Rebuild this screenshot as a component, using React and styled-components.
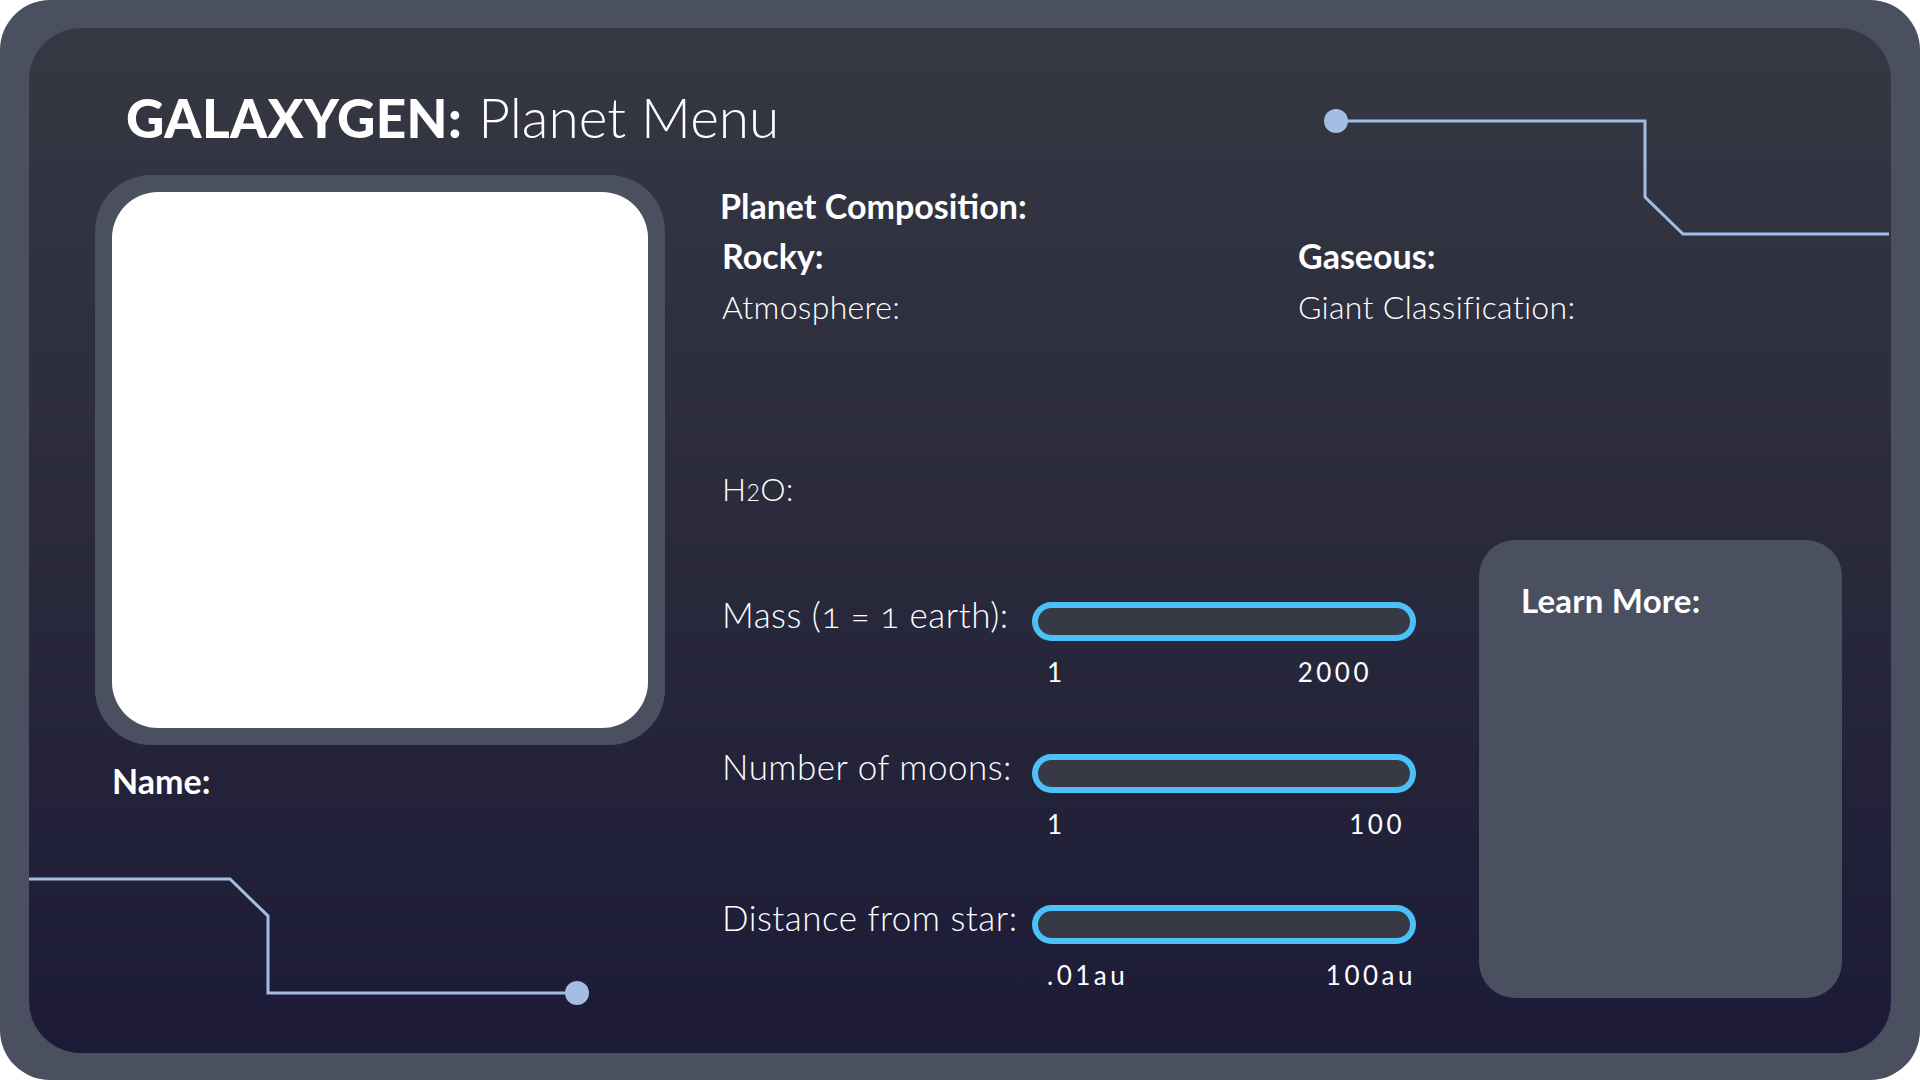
import styled, { createGlobalStyle } from 'styled-components';

const SLIDERS = [
	{ id: 'mass', label: 'Mass (1 = 1 earth):', min: '1', max: '2000', endGap: 44 },
	{ id: 'moons', label: 'Number of moons:', min: '1', max: '100', endGap: 11 },
	{ id: 'distance', label: 'Distance from star:', min: '.01au', max: '100au', endGap: 0 },
];

const LINE = '#a4bee3';

export default function App() {
	return (
		<>
			<GlobalStyle />
			<Frame>
				<Panel>
					<Circuit viewBox='0 0 1862 1025' preserveAspectRatio='none'>
						<polyline
							points='1307,93 1616,93 1616,169 1654,206 1860,206'
							fill='none'
							stroke={LINE}
							strokeWidth='3'
						/>
						<circle cx='1307' cy='93' r='12' fill={LINE} />
						<polyline
							points='0,851 201,851 239,888 239,965 548,965'
							fill='none'
							stroke={LINE}
							strokeWidth='3'
						/>
						<circle cx='548' cy='965' r='12' fill={LINE} />
					</Circuit>

					<Title>
						<Brand>GALAXYGEN:</Brand>
						<Subtitle>Planet Menu</Subtitle>
					</Title>

					<Body>
						<LeftColumn>
							<PhotoFrame>
								<Photo />
							</PhotoFrame>
							<NameLabel>Name:</NameLabel>
						</LeftColumn>

						<MiddleColumn>
							<SectionTitle>Planet Composition:</SectionTitle>
							<CompositionGrid>
								<CompositionColumn>
									<Heading>Rocky:</Heading>
									<LightLabel>Atmosphere:</LightLabel>
									<LightLabel $gap={150}>
										H<Small>2</Small>O:
									</LightLabel>
								</CompositionColumn>
								<CompositionColumn>
									<Heading>Gaseous:</Heading>
									<LightLabel>Giant Classification:</LightLabel>
								</CompositionColumn>
							</CompositionGrid>

							<SliderList>
								{SLIDERS.map((s) => (
									<SliderRow key={s.id}>
										<SliderLabel>{s.label}</SliderLabel>
										<Track />
										<Scale $endGap={s.endGap}>
											<span>{s.min}</span>
											<span>{s.max}</span>
										</Scale>
									</SliderRow>
								))}
							</SliderList>
						</MiddleColumn>

						<LearnMore>
							<LearnTitle>Learn More:</LearnTitle>
						</LearnMore>
					</Body>
				</Panel>
			</Frame>
		</>
	);
}

const GlobalStyle = createGlobalStyle`
	* {
		box-sizing: border-box;
	}
	html, body {
		margin: 0;
		padding: 0;
		background: #ffffff;
	}
	body {
		font-family: 'Lato', 'Open Sans', sans-serif;
		color: #ffffff;
	}
`;

const Frame = styled.div`
	width: 1920px;
	height: 1080px;
	padding: 28px 29px 27px 29px;
	background: #4a505f;
	border-radius: 50px;
`;

const Panel = styled.div`
	position: relative;
	height: 100%;
	display: flex;
	flex-direction: column;
	padding: 62px 0 55px 66px;
	border-radius: 52px;
	background: linear-gradient(180deg, #363843 0%, #2a2a3c 50%, #1c1a37 100%);
`;

const Circuit = styled.svg`
	position: absolute;
	inset: 0;
	width: 100%;
	height: 100%;
	pointer-events: none;
`;

const Title = styled.h1`
	display: flex;
	align-items: baseline;
	gap: 16px;
	height: 53px;
	margin: 0 0 32px 31px;
	font-size: 53px;
	line-height: 1;
	font-weight: normal;
`;

const Brand = styled.span`
	font-weight: 900;
	letter-spacing: 0.4px;
`;

const Subtitle = styled.span`
	font-size: 55px;
	font-weight: 300;
`;

const Body = styled.div`
	flex: 1;
	display: grid;
	grid-template-columns: 570px 704px 363px;
	column-gap: 55px;
	align-items: start;
`;

const LeftColumn = styled.div`
	display: flex;
	flex-direction: column;
`;

const PhotoFrame = styled.div`
	width: 570px;
	height: 570px;
	padding: 17px;
	background: #4a505f;
	border-radius: 56px;
`;

const Photo = styled.div`
	width: 100%;
	height: 100%;
	background: #ffffff;
	border-radius: 46px;
`;

const NameLabel = styled.div`
	margin: 19px 0 0 17px;
	font-size: 34px;
	font-weight: 700;
	line-height: 1;
`;

const MiddleColumn = styled.div`
	display: flex;
	flex-direction: column;
	padding-top: 14px;
`;

const SectionTitle = styled.h2`
	margin: 0;
	font-size: 34px;
	font-weight: 700;
	line-height: 1;
`;

const CompositionGrid = styled.div`
	display: grid;
	grid-template-columns: 576px auto;
	margin-top: 16px;
	padding-left: 2px;
`;

const CompositionColumn = styled.div`
	display: flex;
	flex-direction: column;
`;

const Heading = styled.h3`
	margin: 0;
	font-size: 34px;
	font-weight: 700;
	line-height: 1;
`;

const LightLabel = styled.div`
	margin-top: ${(p) => p.$gap || 18}px;
	font-size: 32px;
	font-weight: 300;
	line-height: 1;
	letter-spacing: 0.3px;
	white-space: nowrap;
`;

const Small = styled.span`
	font-size: 0.72em;
`;

const SliderList = styled.div`
	display: flex;
	flex-direction: column;
	gap: 68.5px;
	margin-top: 97px;
	padding-left: 2px;
`;

const SliderRow = styled.div`
	display: grid;
	grid-template-columns: 310px 384px;
	align-items: start;
`;

const SliderLabel = styled.div`
	font-size: 35px;
	font-weight: 300;
	line-height: 25px;
	letter-spacing: 0.5px;
	white-space: nowrap;
	font-variant-numeric: oldstyle-nums;
`;

const Track = styled.div`
	height: 39px;
	border: 6px solid #4bc1f8;
	border-radius: 20px;
	background: #373a44;
`;

const Scale = styled.div`
	grid-column: 2;
	display: flex;
	justify-content: space-between;
	margin-top: 18px;
	padding: 0 ${(p) => p.$endGap}px 0 15px;
	font-size: 26px;
	font-weight: 400;
	line-height: 1;
	letter-spacing: 3.5px;
`;

const LearnMore = styled.div`
	align-self: end;
	height: 458px;
	padding: 44px 42px;
	background: #4a505f;
	border-radius: 36px;
`;

const LearnTitle = styled.h3`
	margin: 0;
	font-size: 33px;
	font-weight: 700;
	line-height: 1;
	letter-spacing: 0.2px;
`;
